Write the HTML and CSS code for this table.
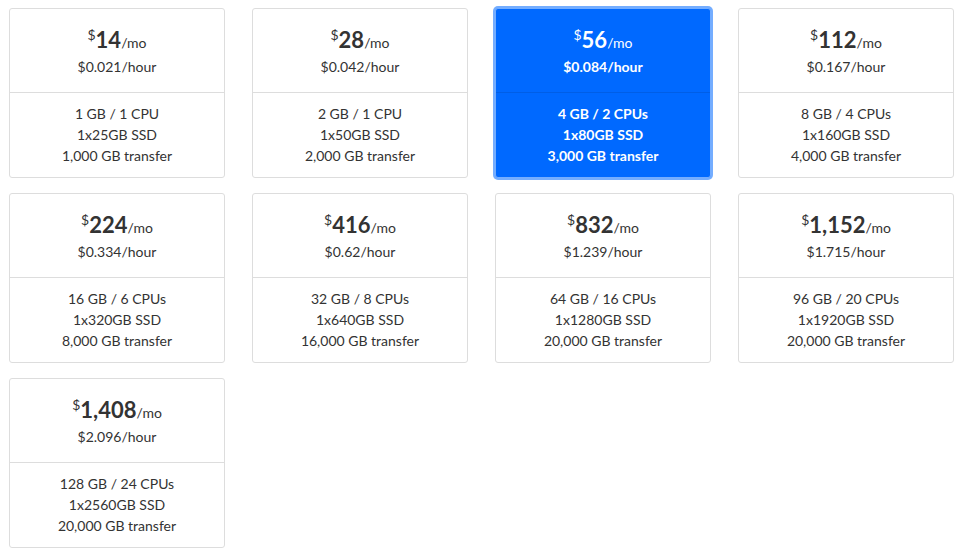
FILE: index.html
```html
<!DOCTYPE html>
<html>
<head>
<meta charset="utf-8">
<link rel="stylesheet" href="styles.css">
</head>
<body>
<div class="grid">
  <div class="card">
    <div class="top"><div class="price"><sup>$</sup><span class="num">14</span><span class="mo">/mo</span></div><div class="hour">$0.021/hour</div></div>
    <div class="specs"><div>1 GB / 1 CPU</div><div>1x25GB SSD</div><div>1,000 GB transfer</div></div>
  </div>
  <div class="card">
    <div class="top"><div class="price"><sup>$</sup><span class="num">28</span><span class="mo">/mo</span></div><div class="hour">$0.042/hour</div></div>
    <div class="specs"><div>2 GB / 1 CPU</div><div>1x50GB SSD</div><div>2,000 GB transfer</div></div>
  </div>
  <div class="card selected">
    <div class="top"><div class="price"><sup>$</sup><span class="num">56</span><span class="mo">/mo</span></div><div class="hour">$0.084/hour</div></div>
    <div class="specs"><div>4 GB / 2 CPUs</div><div>1x80GB SSD</div><div>3,000 GB transfer</div></div>
  </div>
  <div class="card">
    <div class="top"><div class="price"><sup>$</sup><span class="num">112</span><span class="mo">/mo</span></div><div class="hour">$0.167/hour</div></div>
    <div class="specs"><div>8 GB / 4 CPUs</div><div>1x160GB SSD</div><div>4,000 GB transfer</div></div>
  </div>
  <div class="card">
    <div class="top"><div class="price"><sup>$</sup><span class="num">224</span><span class="mo">/mo</span></div><div class="hour">$0.334/hour</div></div>
    <div class="specs"><div>16 GB / 6 CPUs</div><div>1x320GB SSD</div><div>8,000 GB transfer</div></div>
  </div>
  <div class="card">
    <div class="top"><div class="price"><sup>$</sup><span class="num">416</span><span class="mo">/mo</span></div><div class="hour">$0.62/hour</div></div>
    <div class="specs"><div>32 GB / 8 CPUs</div><div>1x640GB SSD</div><div>16,000 GB transfer</div></div>
  </div>
  <div class="card">
    <div class="top"><div class="price"><sup>$</sup><span class="num">832</span><span class="mo">/mo</span></div><div class="hour">$1.239/hour</div></div>
    <div class="specs"><div>64 GB / 16 CPUs</div><div>1x1280GB SSD</div><div>20,000 GB transfer</div></div>
  </div>
  <div class="card">
    <div class="top"><div class="price"><sup>$</sup><span class="num">1,152</span><span class="mo">/mo</span></div><div class="hour">$1.715/hour</div></div>
    <div class="specs"><div>96 GB / 20 CPUs</div><div>1x1920GB SSD</div><div>20,000 GB transfer</div></div>
  </div>
  <div class="card">
    <div class="top"><div class="price"><sup>$</sup><span class="num">1,408</span><span class="mo">/mo</span></div><div class="hour">$2.096/hour</div></div>
    <div class="specs"><div>128 GB / 24 CPUs</div><div>1x2560GB SSD</div><div>20,000 GB transfer</div></div>
  </div>
</div>
</body>
</html>
```
FILE: styles.css
```css
* { box-sizing: border-box; }
body {
  margin: 0;
  background: #fff;
  font-family: Lato, "Open Sans", sans-serif;
  color: #333;
}
.grid {
  display: grid;
  grid-template-columns: repeat(4, 216px);
  grid-auto-rows: 170px;
  column-gap: 27px;
  row-gap: 15px;
  padding: 8px 0 0 9px;
}
.card {
  border: 1px solid #ddd;
  border-radius: 3px;
  display: flex;
  flex-direction: column;
  text-align: center;
  background: #fff;
}
.top {
  height: 84px;
  border-bottom: 1px solid #ddd;
  padding-top: 15px;
}
.price {
  font-size: 14px;
  line-height: 32px;
  height: 32px;
}
.price sup {
  font-size: 14px;
  vertical-align: 0;
  position: relative;
  top: -8px;
}
.num {
  font-size: 22px;
  font-weight: 700;
}
.hour {
  font-size: 14px;
  line-height: 21px;
}
.specs {
  padding-top: 10px;
  font-size: 14px;
  line-height: 21px;
}
.selected {
  background: #0069ff;
  border-color: #74adff;
  color: #fff;
  font-weight: 700;
  box-shadow: 0 0 0 2px #74adff;
}
.selected .top {
  border-bottom-color: #005ee6;
}
.selected .mo, .selected sup { font-weight: 400; }
```
